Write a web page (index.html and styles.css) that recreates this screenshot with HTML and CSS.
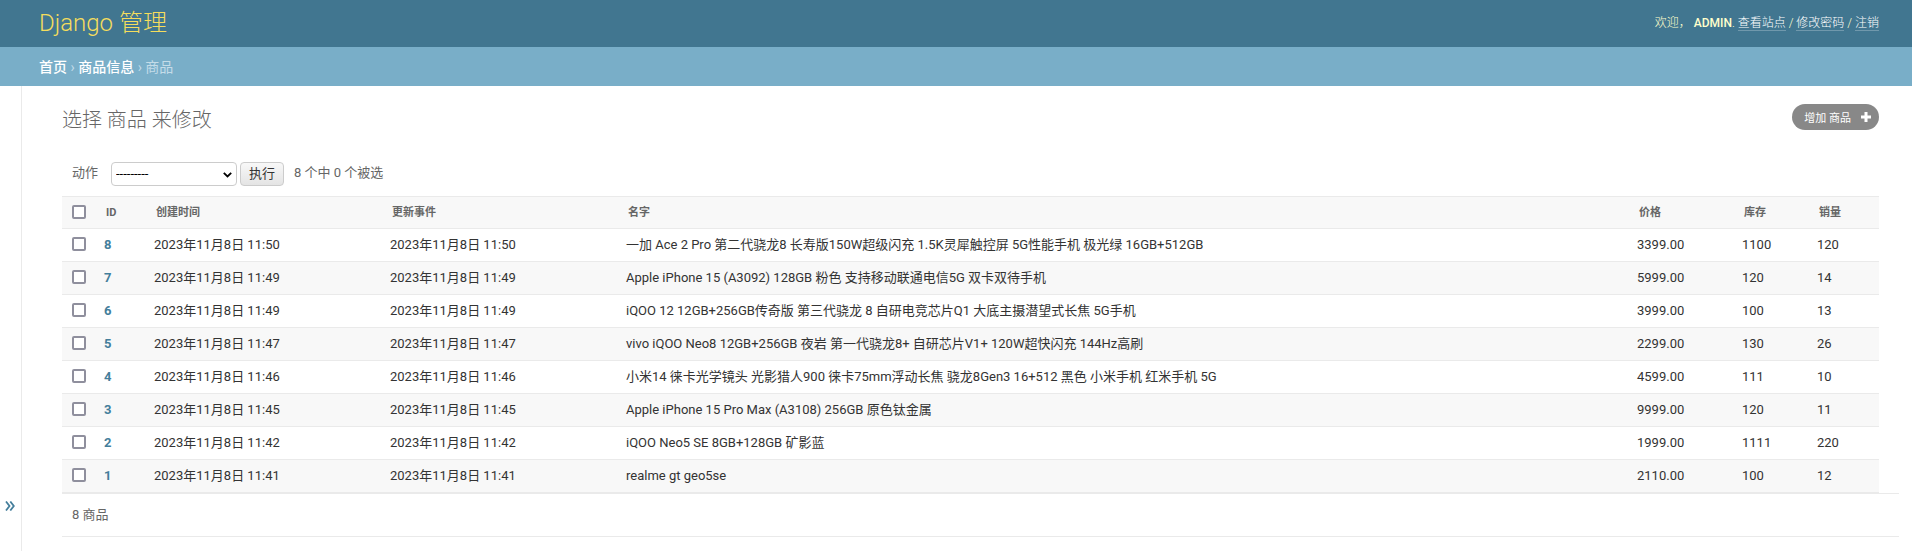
FILE: index.html
```html
<!DOCTYPE html>
<html lang="zh-Hans">
<head>
<meta charset="utf-8">
<title>选择 商品 来修改 | Django 管理</title>
<link rel="stylesheet" href="styles.css">
</head>
<body>
<header class="header">
  <h1 class="branding"><a href="#">Django 管理</a></h1>
  <div class="user-tools">欢迎， <strong>admin</strong>. <a href="#">查看站点</a> / <a href="#">修改密码</a> / <a href="#">注销</a></div>
</header>
<nav class="breadcrumbs"><a href="#">首页</a> › <a href="#">商品信息</a> › 商品</nav>
<div class="main">
  <button class="toggle-nav" type="button" aria-label="切换导航">
    <svg width="10" height="10" viewBox="0 0 10 10" aria-hidden="true"><path d="M1 .5 4.5 5 1 9.500M5.300 .5 8.800 5 5.300 9.500" fill="none" stroke="currentColor" stroke-width="1.800"/></svg>
  </button>
  <main class="content">
    <div class="title-row">
      <h2 class="title">选择 商品 来修改</h2>
      <a class="add-link" href="#">增加 商品
        <svg width="10" height="10" viewBox="0 0 10 10" aria-hidden="true"><path d="M5 0v10M0 5h10" fill="none" stroke="currentColor" stroke-width="3"/></svg>
      </a>
    </div>
    <form>
      <div class="actions">
        <label for="action">动作</label>
        <div class="select-wrap">
          <select id="action" name="action"><option>---------</option></select>
          <svg width="9" height="6" viewBox="0 0 9 6" aria-hidden="true"><path d="M.8 .8 4.500 4.500 8.200 .8" fill="none" stroke="currentColor" stroke-width="1.800"/></svg>
        </div>
        <button class="go" type="button">执行</button>
        <span class="counter">8 个中 0 个被选</span>
      </div>
      <table class="results">
        <colgroup><col class="c-check"><col class="c-id"><col class="c-date"><col class="c-date"><col><col class="c-price"><col class="c-stock"><col class="c-sales"></colgroup>
        <thead>
          <tr><th><input type="checkbox" aria-label="全选"></th><th>ID</th><th>创建时间</th><th>更新事件</th><th>名字</th><th>价格</th><th>库存</th><th>销量</th></tr>
        </thead>
        <tbody>
          <tr><td><input type="checkbox" aria-label="选择 8"></td><th><a href="#">8</a></th><td>2023年11月8日 11:50</td><td>2023年11月8日 11:50</td><td>一加 Ace 2 Pro 第二代骁龙8 长寿版150W超级闪充 1.5K灵犀触控屏 5G性能手机 极光绿 16GB+512GB</td><td>3399.00</td><td>1100</td><td>120</td></tr>
          <tr><td><input type="checkbox" aria-label="选择 7"></td><th><a href="#">7</a></th><td>2023年11月8日 11:49</td><td>2023年11月8日 11:49</td><td>Apple iPhone 15 (A3092) 128GB 粉色 支持移动联通电信5G 双卡双待手机</td><td>5999.00</td><td>120</td><td>14</td></tr>
          <tr><td><input type="checkbox" aria-label="选择 6"></td><th><a href="#">6</a></th><td>2023年11月8日 11:49</td><td>2023年11月8日 11:49</td><td>iQOO 12 12GB+256GB传奇版 第三代骁龙 8 自研电竞芯片Q1 大底主摄潜望式长焦 5G手机</td><td>3999.00</td><td>100</td><td>13</td></tr>
          <tr><td><input type="checkbox" aria-label="选择 5"></td><th><a href="#">5</a></th><td>2023年11月8日 11:47</td><td>2023年11月8日 11:47</td><td>vivo iQOO Neo8 12GB+256GB 夜岩 第一代骁龙8+ 自研芯片V1+ 120W超快闪充 144Hz高刷</td><td>2299.00</td><td>130</td><td>26</td></tr>
          <tr><td><input type="checkbox" aria-label="选择 4"></td><th><a href="#">4</a></th><td>2023年11月8日 11:46</td><td>2023年11月8日 11:46</td><td>小米14 徕卡光学镜头 光影猎人900 徕卡75mm浮动长焦 骁龙8Gen3 16+512 黑色 小米手机 红米手机 5G</td><td>4599.00</td><td>111</td><td>10</td></tr>
          <tr><td><input type="checkbox" aria-label="选择 3"></td><th><a href="#">3</a></th><td>2023年11月8日 11:45</td><td>2023年11月8日 11:45</td><td>Apple iPhone 15 Pro Max (A3108) 256GB 原色钛金属</td><td>9999.00</td><td>120</td><td>11</td></tr>
          <tr><td><input type="checkbox" aria-label="选择 2"></td><th><a href="#">2</a></th><td>2023年11月8日 11:42</td><td>2023年11月8日 11:42</td><td>iQOO Neo5 SE 8GB+128GB 矿影蓝</td><td>1999.00</td><td>1111</td><td>220</td></tr>
          <tr><td><input type="checkbox" aria-label="选择 1"></td><th><a href="#">1</a></th><td>2023年11月8日 11:41</td><td>2023年11月8日 11:41</td><td>realme gt geo5se</td><td>2110.00</td><td>100</td><td>12</td></tr>
        </tbody>
      </table>
      <p class="paginator">8 商品</p>
    </form>
  </main>
</div>
</body>
</html>
```
FILE: styles.css
```css
* { box-sizing: border-box; }

body {
  margin: 0;
  min-height: 100vh;
  display: flex;
  flex-direction: column;
  font-family: Roboto, "Noto Sans CJK SC", sans-serif;
  font-size: 13px;
  color: #333;
  background: #fff;
}

a { color: inherit; text-decoration: none; }

.header {
  display: flex;
  align-items: center;
  justify-content: space-between;
  padding: 7px 33px 8px 39px;
  background: #417690;
  color: #ffc;
}

.branding {
  margin: 0;
  font-size: 24px;
  line-height: 32px;
  font-weight: 300;
  color: #f5dd5d;
}

.user-tools {
  font-size: 12px;
  line-height: 16px;
  font-weight: 300;
  text-transform: uppercase;
}

.user-tools strong { font-weight: 500; }

.user-tools a {
  color: #fff;
  border-bottom: 1px solid rgba(255, 255, 255, .25);
}

.breadcrumbs {
  padding: 10px 39px 9px;
  font-size: 14px;
  line-height: 20px;
  background: #79aec8;
  color: #c4dce8;
}

.breadcrumbs a { color: #fff; font-weight: 500; }

.main { display: flex; flex: 1; }

.toggle-nav {
  display: flex;
  align-items: flex-end;
  width: 22px;
  padding: 0 0 40px 5px;
  border: 0;
  border-right: 1px solid #eaeaea;
  background: #fff;
  color: #447e9b;
}

.content {
  flex: 1;
  min-width: 0;
  padding: 18px 33px 0 40px;
}

.title-row {
  display: flex;
  align-items: flex-start;
  justify-content: space-between;
}

.title {
  margin: 0;
  font-size: 20px;
  line-height: 32px;
  font-weight: 300;
  color: #666;
}

.add-link {
  display: flex;
  align-items: center;
  gap: 10px;
  height: 26px;
  padding: 0 8px 0 12px;
  border-radius: 13px;
  background: #888;
  color: #fff;
  font-size: 11px;
}

.actions {
  display: flex;
  align-items: flex-start;
  margin-top: 26px;
  padding: 0 10px 10px;
  line-height: 22px;
  color: #666;
}

.select-wrap { position: relative; margin: 0 3px 0 13px; }

.select-wrap select {
  display: block;
  appearance: none;
  width: 126px;
  height: 24px;
  padding: 0 4px 2px;
  border: 1px solid #ccc;
  border-radius: 4px;
  background: #fff;
  color: #000;
  font-family: inherit;
  font-size: 13px;
}

.select-wrap svg {
  position: absolute;
  top: 10px;
  right: 5px;
  color: #000;
  pointer-events: none;
}

.go {
  width: 44px;
  height: 24px;
  padding: 0 0 4px;
  border: 1px solid #ccc;
  border-radius: 4px;
  background: linear-gradient(#f8f8f8, #e4e4e4);
  color: #333;
  font-family: inherit;
  font-size: 13px;
}

.counter { margin-left: 10px; }

.results {
  width: 100%;
  table-layout: fixed;
  border-collapse: separate;
  border-spacing: 0;
}

.c-check { width: 34px; }
.c-id { width: 50px; }
.c-date { width: 236px; }
.c-price { width: 105px; }
.c-stock { width: 75px; }
.c-sales { width: 70px; }

.results td,
.results th {
  height: 33px;
  padding: 0 8px;
  border-bottom: 1px solid #eaeaea;
  text-align: left;
  line-height: 16px;
}

.results thead th {
  padding: 0 10px;
  border-top: 1px solid #eaeaea;
  background: #f8f8f8;
  color: #666;
  font-size: 11px;
}

.results tbody th { color: #447e9b; font-size: 13px; }
.results tbody tr:nth-child(even) { background: #f8f8f8; }

.results tr > :first-child { padding: 0 10px; }

.results input {
  display: block;
  appearance: none;
  width: 14px;
  height: 14px;
  margin: 0 0 2px;
  border: 2px solid #8f8f9d;
  border-radius: 2px;
  background: #fff;
}

.paginator {
  margin: 0 -20px 0 0;
  padding: 13px 10px;
  border-top: 1px solid #eaeaea;
  border-bottom: 1px solid #eaeaea;
  line-height: 16px;
  color: #666;
}
```
